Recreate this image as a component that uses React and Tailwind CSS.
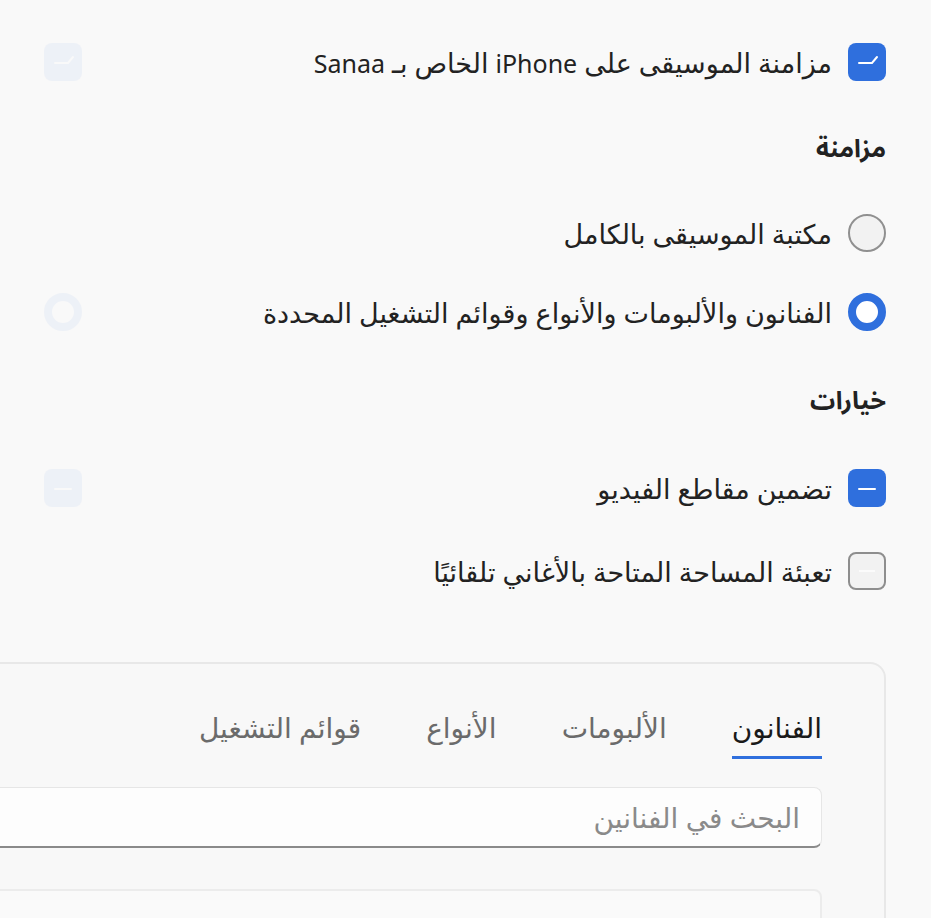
import React from 'react';

const font = { fontFamily: '"Noto Sans", "DejaVu Sans", sans-serif' };
const headFont = { fontFamily: '"Noto Sans Arabic", "DejaVu Sans", sans-serif' };

function CheckBox({ mark }) {
  return (
    <div className="w-[38px] h-[38px] shrink-0 rounded-[8px] bg-[#2f6fdd]">
      <svg width="38" height="38" viewBox="0 0 38 38" fill="none" stroke="#ffffff" strokeWidth="2" strokeLinecap="round">
        {mark === 'check' ? <path d="M11 20 H24 L29 14" /> : <path d="M11 20 H27" />}
      </svg>
    </div>
  );
}

function EmptyBox() {
  return (
    <div className="w-[38px] h-[38px] shrink-0 rounded-[8px] bg-[#f2f2f2] border-2 border-[#8e8e8e] flex items-center justify-center">
      <div className="w-[16px] h-[2px] bg-[#fbfbfb]" />
    </div>
  );
}

function Radio({ on }) {
  return on ? (
    <div className="w-[38px] h-[38px] shrink-0 rounded-full border-[8px] border-[#2f6fdd] bg-white" />
  ) : (
    <div className="w-[38px] h-[38px] shrink-0 rounded-full border-2 border-[#909090] bg-[#f2f2f2]" />
  );
}

function Row({ control, label, ghost }) {
  return (
    <div className="flex items-center justify-between h-[38px]">
      <div className="flex items-center gap-4">
        {control}
        <span className="text-[27px] text-[#222] leading-none whitespace-nowrap">{label}</span>
      </div>
      {ghost && <div className="opacity-[0.05]">{ghost}</div>}
    </div>
  );
}

const tabs = ['الفنانون', 'الألبومات', 'الأنواع', 'قوائم التشغيل'];

export default function App() {
  return (
    <div dir="rtl" style={font} className="w-[931px] h-[918px] overflow-hidden bg-[#f9f9f9] pr-[45px] pl-[44px] pt-[43px]">
      <Row
        control={<CheckBox mark="check" />}
        label={
          <>
            مزامنة الموسيقى على <span className="text-[25px]">iPhone</span> الخاص بـ <span className="text-[25px]">Sanaa</span>
          </>
        }
        ghost={<CheckBox mark="check" />}
      />

      <h2 style={headFont} className="mt-[51px] h-[36px] flex items-center text-[25px] font-bold text-[#222]">مزامنة</h2>

      <div className="mt-[46px]">
        <Row control={<Radio />} label="مكتبة الموسيقى بالكامل" />
      </div>
      <div className="mt-[41px]">
        <Row control={<Radio on />} label="الفنانون والألبومات والأنواع وقوائم التشغيل المحددة" ghost={<Radio on />} />
      </div>

      <h2 style={headFont} className="mt-[53px] h-[36px] flex items-center text-[25px] font-bold text-[#222]">خيارات</h2>

      <div className="mt-[49px]">
        <Row control={<CheckBox mark="minus" />} label="تضمين مقاطع الفيديو" ghost={<CheckBox mark="minus" />} />
      </div>
      <div className="mt-[45px]">
        <Row control={<EmptyBox />} label="تعبئة المساحة المتاحة بالأغاني تلقائيًا" />
      </div>

      <div className="mt-[72px] ml-[-80px] h-[300px] rounded-tr-[16px] border-2 border-[#e8e8e8] bg-[#f8f8f8] pr-[62px] pt-[42px]">
        <div className="flex gap-[65px] h-[54px]">
          {tabs.map((t, i) => (
            <div key={t} className="flex flex-col items-stretch">
              <span className={`text-[28px] leading-[42px] whitespace-nowrap ${i === 0 ? 'text-[#1a1a1a]' : 'text-[#6b6b6b]'}`}>{t}</span>
              {i === 0 && <div className="mt-[8px] h-[3px] bg-[#2f6fdd]" />}
            </div>
          ))}
        </div>
        <div className="mt-[27px] h-[61px] rounded-[8px] border border-[#e6e6e6] border-b-2 border-b-[#8a8a8a] bg-[#fdfdfd] flex items-center pr-[21px]">
          <span className="text-[28px] text-[#8a8a8a] whitespace-nowrap">البحث في الفنانين</span>
        </div>
        <div className="mt-[41px] h-[80px] rounded-[8px] border-2 border-[#ececec] bg-[#fafafa]" />
      </div>
    </div>
  );
}
